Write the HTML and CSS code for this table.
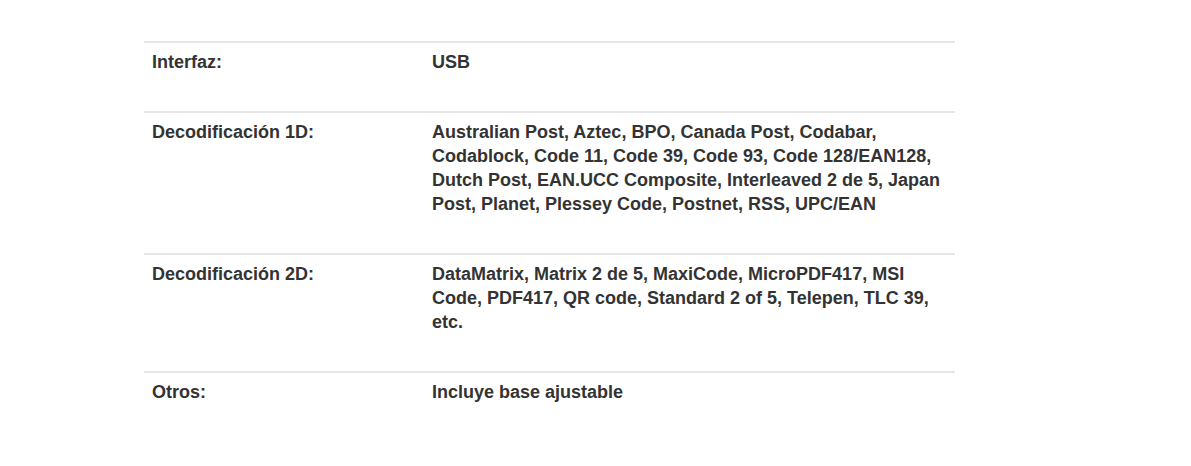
FILE: index.html
```html
<!DOCTYPE html>
<html lang="es">
<head>
<meta charset="utf-8">
<title>Especificaciones</title>
<link rel="stylesheet" href="styles.css">
</head>
<body>
<div class="specs">
  <div class="row">
    <div class="label">Interfaz:</div>
    <div class="value">USB</div>
  </div>
  <div class="row">
    <div class="label">Decodificación 1D:</div>
    <div class="value">Australian Post, Aztec, BPO, Canada Post, Codabar, Codablock, Code 11, Code 39, Code 93, Code 128/EAN128, Dutch Post, EAN.UCC Composite, Interleaved 2 de 5, Japan Post, Planet, Plessey Code, Postnet, RSS, UPC/EAN</div>
  </div>
  <div class="row">
    <div class="label">Decodificación 2D:</div>
    <div class="value">DataMatrix, Matrix 2 de 5, MaxiCode, MicroPDF417, MSI Code, PDF417, QR code, Standard 2 of 5, Telepen, TLC 39, etc.</div>
  </div>
  <div class="row">
    <div class="label">Otros:</div>
    <div class="value">Incluye base ajustable</div>
  </div>
</div>
</body>
</html>
```
FILE: styles.css
```css
html, body {
  margin: 0;
  padding: 0;
  background: #fff;
}
body {
  font-family: "Liberation Sans", Arial, sans-serif;
  font-size: 18px;
  font-weight: bold;
  line-height: 24px;
  color: #333;
}
.specs {
  width: 811px;
  margin: 41px 0 0 144px;
}
.row {
  display: grid;
  grid-template-columns: 280px 1fr;
  border-top: 2px solid #e6e6e6;
  padding: 7px 0 37px;
}
.label, .value {
  padding: 0 8px;
}
```
